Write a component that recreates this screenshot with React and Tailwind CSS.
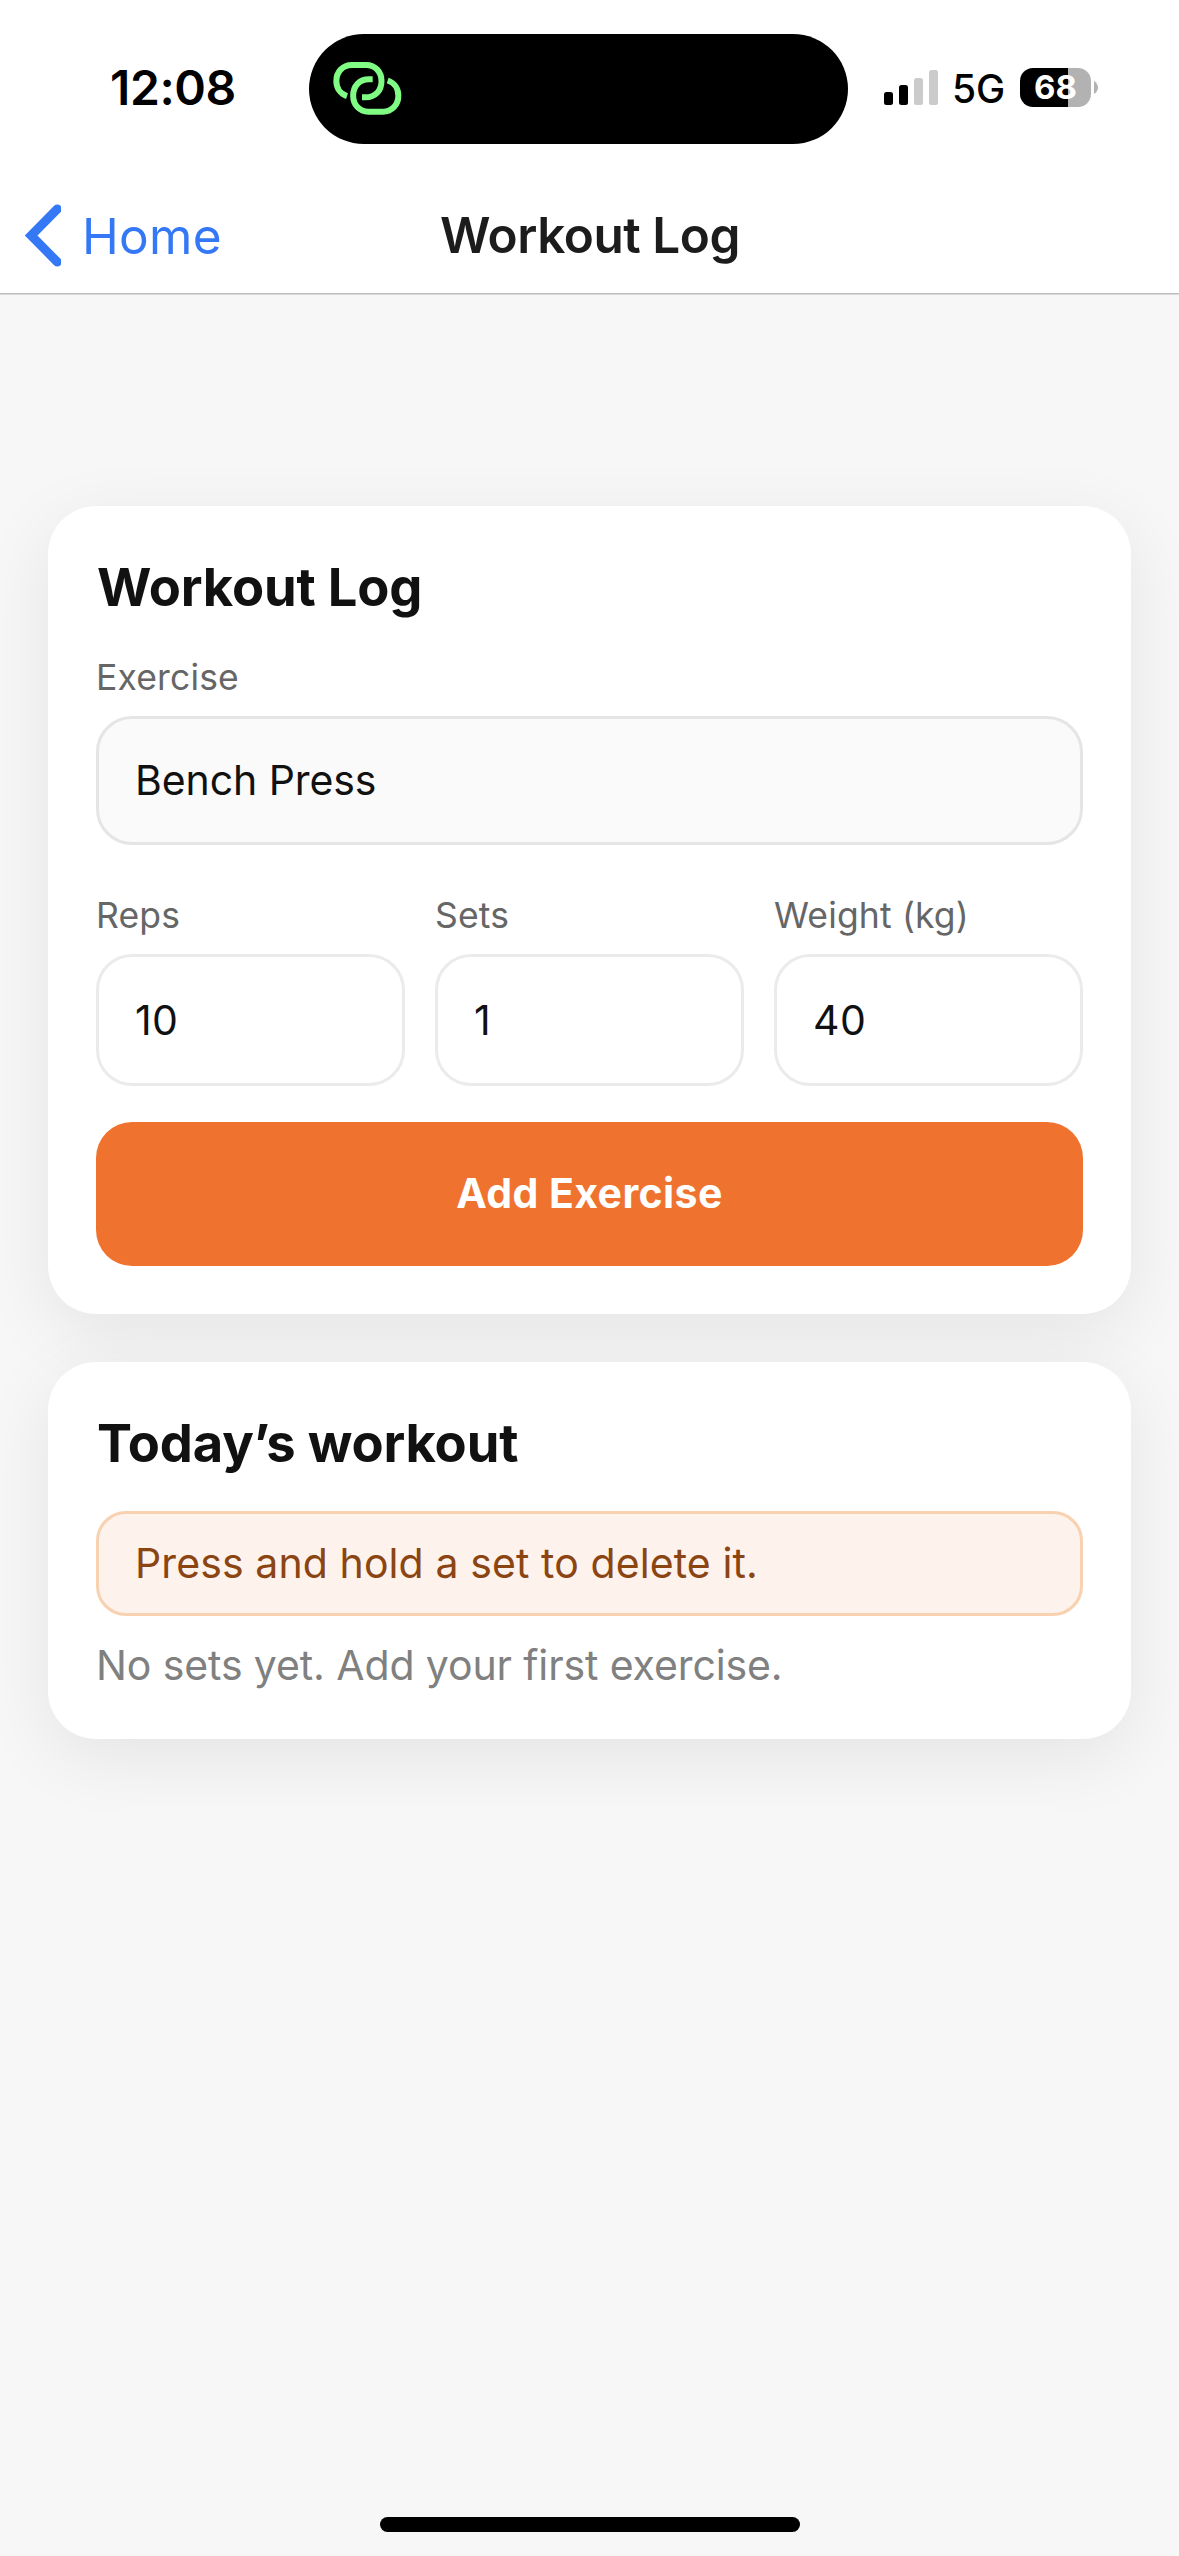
import React from "react";

function LinkIcon() {
  const ring =
    "M84 138.500C64 132 52 114 52 93C52 66 71 45 98 45H142C169 45 187.500 66 187.500 93C187.500 122 169 142 140 142H129";
  return (
    <svg
      className="mt-4 ml-2.5 h-20 w-[100px]"
      viewBox="0 0 300 240"
      fill="none"
      stroke="#80fb84"
      strokeWidth="18"
    >
      <path d={ring} />
      <path d={ring} transform="rotate(180 145 115)" />
    </svg>
  );
}

function SignalIcon() {
  return (
    <svg className="mt-[70px] ml-9 h-[35px] w-[54px]" viewBox="0 0 54 35">
      <rect x="0" y="22" width="9" height="13" rx="2.500" fill="#000" />
      <rect x="15" y="15" width="9" height="20" rx="2.500" fill="#000" />
      <rect x="30" y="8" width="9" height="27" rx="2.500" fill="#cbcbcb" />
      <rect x="45" y="0" width="9" height="35" rx="2.500" fill="#cbcbcb" />
    </svg>
  );
}

function Battery() {
  return (
    <div className="mt-[68px] flex items-center">
      <div className="flex h-[39px] w-[71px] items-center justify-center overflow-hidden rounded-[13px] bg-[linear-gradient(to_right,#000_48px,#b2b2b2_48px)] text-[33px] leading-[39px] font-bold text-white">
        68
      </div>
      <svg className="ml-[3px] h-[13px] w-[4px]" viewBox="0 0 4 13">
        <path d="M0 0C2.500 1.500 4 4 4 6.500S2.500 11.500 0 13Z" fill="#b2b2b2" />
      </svg>
    </div>
  );
}

function StatusBar() {
  return (
    <div className="flex h-[178px] items-start text-black">
      <div className="mt-[63px] w-[309px] pl-[110px] text-[48px] leading-[49px] font-semibold tracking-[-0.4px]">
        12:08
      </div>
      <div className="mt-[34px] h-[110px] w-[539px] rounded-full bg-black">
        <LinkIcon />
      </div>
      <SignalIcon />
      <div className="mt-[69px] w-[82px] pl-3.5 text-[39px] leading-[39px] font-medium">
        5G
      </div>
      <Battery />
    </div>
  );
}

function NavBar() {
  return (
    <div className="grid h-[115px] grid-cols-3 items-center">
      <button className="flex items-center pl-6 text-[49.5px] leading-[60px] tracking-[0.3px] text-[#3478f6]">
        <svg className="h-[64px] w-[37px]" viewBox="0 0 37 64">
          <path
            d="M33.300 5L7.100 31.500L33.300 58"
            fill="none"
            stroke="currentColor"
            strokeWidth="9"
            strokeLinecap="round"
          />
        </svg>
        <span className="ml-[21px]">Home</span>
      </button>
      <h1 className="mb-0.5 pl-px text-center text-[49.5px] leading-[60px] font-semibold tracking-[-0.47px] whitespace-nowrap text-[#1c1c1c]">
        Workout Log
      </h1>
    </div>
  );
}

function Card({ title, children }) {
  return (
    <section className="flex flex-col rounded-[48px] bg-white p-12 shadow-[0_18px_72px_rgba(0,0,0,0.08)]">
      <h2 className="pl-px text-[52.5px] leading-[66px] font-bold tracking-[-0.16px] text-[#111]">
        {title}
      </h2>
      {children}
    </section>
  );
}

function Label({ children }) {
  return (
    <span className="mb-3.5 block text-[35.5px] leading-[48px] tracking-[0.15px] whitespace-nowrap text-[#666]">
      {children}
    </span>
  );
}

function NumberField({ label, value }) {
  return (
    <label>
      <Label>{label}</Label>
      <div className="flex h-[132px] items-center rounded-[36px] border-3 border-[#ebebeb] px-9 pt-0.5 text-[41px] tracking-[0.4px] text-[#111]">
        {value}
      </div>
    </label>
  );
}

export default function App() {
  return (
    <div className="flex h-[2556px] w-[1179px] flex-col overflow-hidden bg-[#f7f7f7] font-['Inter',sans-serif]">
      <header className="h-[295px] shrink-0 bg-white">
        <StatusBar />
        <NavBar />
        <div className="h-px bg-[#bebebe]" />
        <div className="h-px bg-[#d8d8d8]" />
      </header>

      <main className="mt-[211px] flex flex-1 flex-col gap-12 px-12">
        <Card title="Workout Log">
          <label className="mt-[34px]">
            <Label>Exercise</Label>
            <div className="flex h-[129px] items-center rounded-[36px] border-3 border-[#e5e5e5] bg-[#fafafa] px-9 text-[41px] tracking-[-0.08px] text-[#111]">
              Bench Press
            </div>
          </label>
          <div className="mt-[47px] grid grid-cols-3 gap-[30px]">
            <NumberField label="Reps" value="10" />
            <NumberField label="Sets" value="1" />
            <NumberField label="Weight (kg)" value="40" />
          </div>
          <button className="mt-9 h-36 rounded-[36px] bg-[#ef732f] text-[41px] font-bold tracking-[0.4px] text-white">
            Add Exercise
          </button>
        </Card>

        <Card title="Today’s workout">
          <div className="mt-[35px] flex h-[105px] items-center rounded-[30px] border-3 border-[#f8d1b0] bg-[#fdf3ec] px-9 text-[41px] tracking-[0.1px] text-[#8b4513]">
            Press and hold a set to delete it.
          </div>
          <p className="mt-6 text-[41px] leading-[51px] tracking-[-0.11px] text-[#808080]">
            No sets yet. Add your first exercise.
          </p>
        </Card>
      </main>

      <div className="mb-6 h-[15px] w-[420px] shrink-0 self-center rounded-full bg-black" />
    </div>
  );
}
